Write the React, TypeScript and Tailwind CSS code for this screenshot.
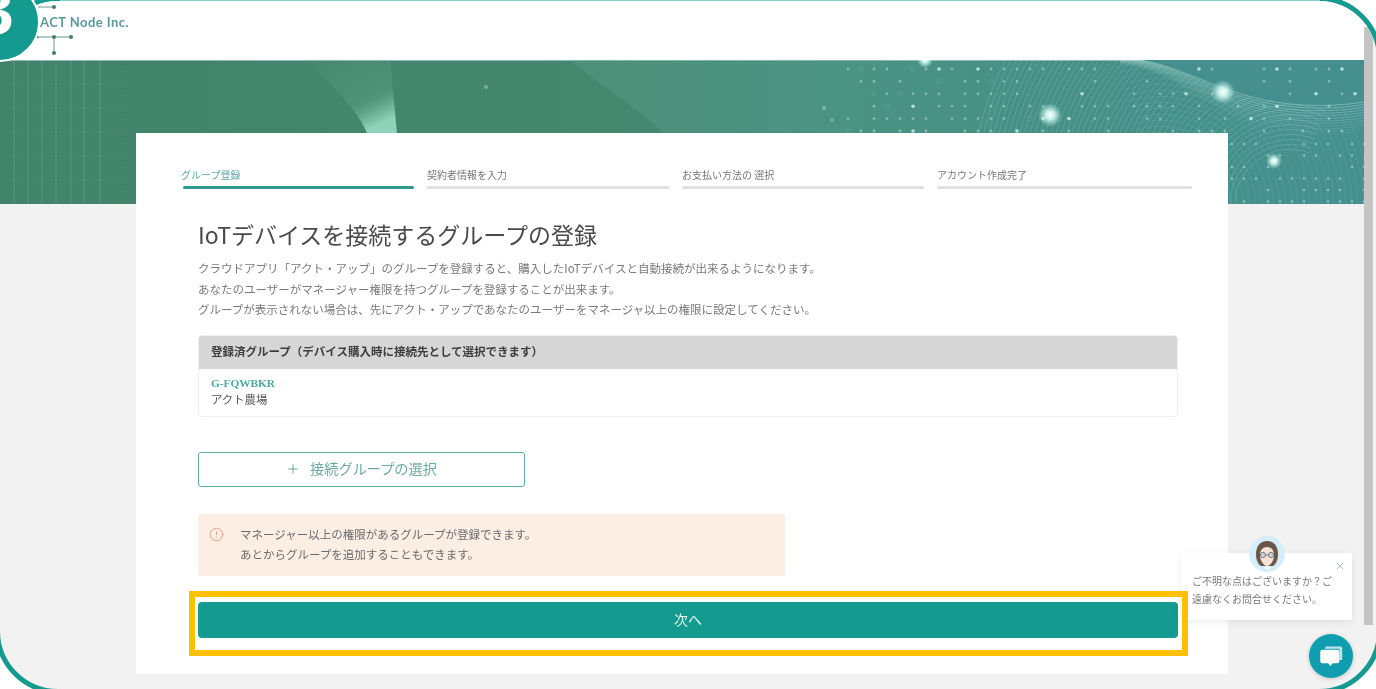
import { CircleAlert, Plus, X } from 'lucide-react'

const steps = [
  { label: 'グループ登録', width: 'w-[231px]', active: true },
  { label: '契約者情報を入力', width: 'w-[242px]', active: false },
  { label: 'お支払い方法の 選択', width: 'w-[242px]', active: false },
  { label: 'アカウント作成完了', width: 'w-[255px]', active: false },
]

// small repeatable noise so the dots stay in the same place on every load
const rand = (i: number) => {
  const v = Math.sin(i * 12.9898) * 43758.5453
  return v - Math.floor(v)
}

const dots: { x: number; y: number; r: number; o: number; ring: boolean }[] = []
for (let row = 0; row < 6; row++) {
  for (let col = 0; col < 40; col++) {
    const x = 848 + col * 13
    const y = 9 + row * 12.4
    const n = rand(row * 40 + col + 3)
    // the grid thins out to the right
    if (n < 0.3 + (col > 14 ? 0.25 : 0)) continue
    dots.push({ x, y, r: n > 0.93 ? 1.8 : 1.4, o: n > 0.93 ? 0.85 : 0.45, ring: n < 0.42 })
  }
}
for (let row = 0; row < 6; row++) {
  for (let col = 0; col < 12; col++) {
    const n = rand(row * 17 + col + 500)
    if (n < 0.4) continue
    dots.push({ x: 1232 + col * 12, y: 84 + row * 11.5, r: 1.3, o: 0.5, ring: false })
  }
}

const arcs = Array.from({ length: 54 }, (_, i) => {
  const r = 55 + i * 5
  return `M ${1290 - r} 144 A ${r} ${r} 0 0 1 ${1290 + r * 0.35} ${144 - r * 0.93}`
})

const crossArcs = Array.from({ length: 26 }, (_, i) => {
  const r = 60 + i * 6
  return `M ${1160 + r} 150 A ${r} ${r} 0 0 0 ${1160 - r * 0.3} ${150 - r * 0.95}`
})

const waves = Array.from({ length: 12 }, (_, i) => {
  const d = i * 2.6
  return `M 1120 ${-2 + d * 0.2} C 1180 ${0 + d * 0.3}, 1215 ${36 + d}, 1290 ${44 + d} C 1320 ${47 + d}, 1345 ${45 + d}, 1364 ${42 + d}`
})

function Banner() {
  return (
    <svg viewBox="0 0 1364 144" className="block h-[144px] w-full blur-[0.5px]">
      <defs>
        <linearGradient id="base" x1="0" x2="1" y1="0" y2="0">
          <stop offset="0" stopColor="#42836c" />
          <stop offset="0.45" stopColor="#45876f" />
          <stop offset="0.62" stopColor="#468f80" />
          <stop offset="1" stopColor="#45908f" />
        </linearGradient>
        <linearGradient id="wedge" x1="0" x2="0.6" y1="0" y2="1">
          <stop offset="0" stopColor="#6aa795" stopOpacity="0.08" />
          <stop offset="0.7" stopColor="#7fbba6" stopOpacity="0.22" />
          <stop offset="1" stopColor="#a8ecd2" stopOpacity="0.75" />
        </linearGradient>
        <linearGradient id="fan" x1="0" x2="1" y1="0" y2="0">
          <stop offset="0" stopColor="#62a893" stopOpacity="0.32" />
          <stop offset="0.6" stopColor="#62a893" stopOpacity="0.18" />
          <stop offset="1" stopColor="#62a893" stopOpacity="0.04" />
        </linearGradient>
        <radialGradient id="glow">
          <stop offset="0" stopColor="#ffffff" />
          <stop offset="0.35" stopColor="#d8fbf4" stopOpacity="0.9" />
          <stop offset="1" stopColor="#b8f0e6" stopOpacity="0" />
        </radialGradient>
      </defs>
      <rect width="1364" height="144" fill="url(#base)" />
      <rect width="1364" height="1" fill="#8db9ad" />

      {/* left grid */}
      {[14, 28, 42, 56, 71, 84, 100].map(x => (
        <line key={x} x1={x} x2={x} y1="0" y2="144" stroke="#7fb3a0" strokeOpacity="0.35" />
      ))}
      {Array.from({ length: 11 }, (_, i) => (
        <line key={i} x1="0" x2="135" y1={12 + i * 12} y2={12 + i * 12} stroke="#7fb3a0" strokeOpacity="0.1" />
      ))}

      {/* wedges */}
      <path d="M 306 0 L 390 0 L 397 73 L 367 73 C 355 45, 330 25, 306 0 Z" fill="url(#wedge)" />
      <path d="M 570 0 L 1000 0 L 1000 73 L 664 73 C 640 50, 600 25, 570 0 Z" fill="url(#fan)" />

      {/* fine arcs */}
      {arcs.map((d, i) => (
        <path key={i} d={d} fill="none" stroke="#b4e4dc" strokeOpacity="0.3" strokeWidth="0.7" />
      ))}
      {crossArcs.map((d, i) => (
        <path key={i} d={d} fill="none" stroke="#b4e4dc" strokeOpacity="0.14" strokeWidth="0.7" />
      ))}
      <path d="M 1120 -2 C 1180 0, 1215 36, 1290 44 C 1320 47, 1345 45, 1364 42 L 1364 0 L 1120 0 Z" fill="#45908f" />
      {waves.map((d, i) => (
        <path key={i} d={d} fill="none" stroke="#c4ece6" strokeOpacity={0.5 - i * 0.04} strokeWidth="0.8" />
      ))}

      {/* dots */}
      {dots.map((d, i) =>
        d.ring ? (
          <circle key={i} cx={d.x} cy={d.y} r={2.2} fill="none" stroke="#a8dcd2" strokeOpacity="0.25" strokeWidth="0.7" />
        ) : (
          <circle key={i} cx={d.x} cy={d.y} r={d.r} fill="#c6efe7" fillOpacity={d.o} />
        ),
      )}
      <circle cx="486" cy="27" r="2" fill="#8cc4b1" fillOpacity="0.7" />
      <circle cx="824" cy="48" r="2.2" fill="#8cc4b1" fillOpacity="0.7" />
      <circle cx="832" cy="60" r="2" fill="#8cc4b1" fillOpacity="0.6" />

      {/* glows */}
      <circle cx="925" cy="0" r="8" fill="url(#glow)" />
      <circle cx="1050" cy="55" r="12" fill="url(#glow)" />
      <circle cx="1223" cy="32" r="12" fill="url(#glow)" />
      <circle cx="1274" cy="101" r="8" fill="url(#glow)" />
    </svg>
  )
}

function Logo() {
  return (
    <svg viewBox="0 0 80 60" className="absolute left-[0px] top-[-1px] h-[60px] w-[80px]">
      <g stroke="#3f7d6c" strokeWidth="0.8" fill="none">
        <path d="M38 7 H54" />
        <path d="M37 37 H71" />
        <path d="M54 37 V53" />
      </g>
      <g fill="#3f7d6c">
        <circle cx="54" cy="7" r="2" />
        <circle cx="37" cy="37" r="1.4" />
        <circle cx="54" cy="37" r="2" />
        <circle cx="71" cy="37" r="2" />
        <circle cx="54" cy="53" r="2" />
      </g>
    </svg>
  )
}

function Avatar() {
  return (
    <svg viewBox="0 0 36 36" className="absolute left-[68px] top-[-17px] h-[36px] w-[36px]">
      <circle cx="18" cy="18" r="18" fill="#d6edfa" />
      <path d="M18 5 C10 5 7 12 7 18 C7 24 9 28 12 30 L24 30 C27 28 29 24 29 18 C29 12 26 5 18 5 Z" fill="#6b574a" />
      <path d="M18 11 C13 11 11 15 11 19 C11 25 15 30 18 30 C21 30 25 25 25 19 C25 15 23 11 18 11 Z" fill="#f6e3d6" />
      <circle cx="14" cy="19" r="2.6" fill="#c9d3da" stroke="#555" strokeWidth="0.7" />
      <circle cx="22" cy="19" r="2.6" fill="#c9d3da" stroke="#555" strokeWidth="0.7" />
      <path d="M16.6 19 H19.4" stroke="#555" strokeWidth="0.7" />
      <path d="M15 31 L18 34 L21 31 Z" fill="#ffffff" />
    </svg>
  )
}

export default function App() {
  return (
    <div className="relative h-[689px] w-[1376px] overflow-hidden bg-white font-['Noto_Sans_CJK_JP','Noto_Sans',sans-serif]">
      <div className="relative -ml-[5px] -mt-[4px] flex h-[698px] w-[1387px] overflow-hidden rounded-[63px] border-[5px] border-[#159a90] bg-[#f2f2f2]">
        <div className="flex w-[1364px] shrink-0 flex-col">
          {/* Header */}
          <div className="relative h-[59px] shrink-0 bg-white">
            <Logo />
            <span className="absolute left-[40px] top-[12px] font-['Lato',sans-serif] text-[13px] font-bold tracking-[0.45px] text-[#5c9a9a] blur-[0.4px]">
              ACT Node Inc.
            </span>
          </div>

          <Banner />

          {/* Card */}
          <div className="relative -mt-[71px] ml-[136px] h-[541px] w-[1092px] shrink-0 bg-white pl-[62px] pr-[50px] pt-[35px]">
            <div className="-ml-[15px] flex w-[1009px] gap-[13px]">
              {steps.map(step => (
                <div key={step.label} className={step.width}>
                  <p
                    className={`h-[14px] text-[10px] leading-[14px] blur-[0.4px] ${step.active ? '-ml-[2px] text-[#62a8a4]' : 'text-[#777]'}`}
                  >
                    {step.label}
                  </p>
                  <div className={`mt-[4px] h-[3px] rounded-full ${step.active ? 'bg-[#2f9a90]' : 'bg-[#e0e0e0]'}`} />
                </div>
              ))}
            </div>

            <h1 className="mt-[29px] text-[23px] font-normal leading-[32px] text-[#4a4a4a] blur-[0.3px]">
              IoTデバイスを接続するグループの登録
            </h1>
            <div className="mt-[8px] text-[11.5px] leading-[20.5px] text-[#7a7a7a] blur-[0.4px]">
              <p>クラウドアプリ「アクト・アップ」のグループを登録すると、購入したIoTデバイスと自動接続が出来るようになります。</p>
              <p>あなたのユーザーがマネージャー権限を持つグループを登録することが出来ます。</p>
              <p>グループが表示されない場合は、先にアクト・アップであなたのユーザーをマネージャ以上の権限に設定してください。</p>
            </div>

            {/* Registered groups */}
            <div className="mt-[15px] w-[980px] overflow-hidden rounded-[4px] border border-[#eeeeee]">
              <div className="flex h-[33px] items-center bg-[#d6d6d6] px-[12px] text-[11.5px] font-bold text-[#3d3d3d]">
                <span className="blur-[0.4px]">登録済グループ（デバイス購入時に接続先として選択できます）</span>
              </div>
              <div className="h-[47px] px-[12px] pt-[7px] blur-[0.3px]">
                <p className="font-['Liberation_Serif',serif] text-[11.3px] font-bold leading-[15px] text-[#4fa89c]">G-FQWBKR</p>
                <p className="text-[11.4px] leading-[16px] text-[#555]">アクト農場</p>
              </div>
            </div>

            <button className="mt-[35px] flex h-[35px] w-[327px] items-center justify-center gap-[10px] rounded-[3px] border border-[#5fafa8] bg-white text-[14.2px] text-[#6fa9a5]">
              <Plus size={14} strokeWidth={1.6} className="text-[#5fa09a]" />
              <span className="blur-[0.4px]">接続グループの選択</span>
            </button>

            <div className="mt-[27px] flex h-[62px] w-[587px] rounded-[2px] bg-[#fdeee4] pl-[11px] pt-[10px]">
              <CircleAlert size={15} strokeWidth={1.2} className="mt-[3px] text-[#d9866a]" />
              <div className="ml-[16px] text-[11.5px] leading-[20px] text-[#6a6a6a] blur-[0.4px]">
                <p>マネージャー以上の権限があるグループが登録できます。</p>
                <p>あとからグループを追加することもできます。</p>
              </div>
            </div>

            <div className="relative mt-[26px] w-[980px]">
              <button className="flex h-[36px] w-full items-center justify-center rounded-[4px] bg-[#159a90] text-[14px] text-[#e8f5f3]">
                <span className="blur-[0.4px]">次へ</span>
              </button>
              <div className="pointer-events-none absolute -bottom-[18px] -left-[9px] -right-[10px] -top-[11px] z-30 border-[6px] border-[#ffc000]" />
            </div>
          </div>
        </div>

        {/* Scrollbar */}
        <div className="w-[9px] shrink-0">
          <div className="h-[26px] bg-white" />
          <div className="h-[598px] bg-[#c4c4c4]" />
        </div>

        {/* Chat popup */}
        <div className="absolute left-[1181px] top-[552px] z-20 h-[67px] w-[171px] bg-white px-[11px] pt-[19px] text-[10px] leading-[18px] text-[#777] shadow-[0_2px_8px_rgba(0,0,0,0.08)]">
          <Avatar />
          <X size={12} strokeWidth={1.4} className="absolute right-[6px] top-[7px] text-[#7fa6bd]" />
          <p className="whitespace-nowrap blur-[0.4px]">ご不明な点はございますか？ご</p>
          <p className="whitespace-nowrap blur-[0.4px]">遠慮なくお問合せください。</p>
        </div>

        {/* Chat button */}
        <div className="absolute left-[1309px] top-[633px] z-20 flex h-[44px] w-[44px] items-center justify-center rounded-full bg-[#119db0] shadow-[0_1px_4px_rgba(0,0,0,0.2)]">
          <svg viewBox="0 0 24 24" className="h-[27px] w-[27px]">
            <path d="M7 3 H20 a1.5 1.5 0 0 1 1.5 1.5 V15 H19 V5 H6 Z" fill="#bfe6ec" />
            <path d="M4 6 H17 a2 2 0 0 1 2 2 V16 a2 2 0 0 1 -2 2 H13 L11 20.5 L9 18 H4 a2 2 0 0 1 -2 -2 V8 a2 2 0 0 1 2 -2 Z" fill="#ffffff" />
          </svg>
        </div>
      </div>

      <div className="absolute left-[60px] right-[56px] top-0 h-[1px] bg-[#7fd0c8]" />

      {/* Step badge */}
      <div className="absolute -left-[40px] -top-[18px] flex h-[80px] w-[80px] items-center justify-center overflow-hidden rounded-full border-[2px] border-white bg-[#159a90]">
        <span className="mb-[24px] mr-[10px] font-['Liberation_Sans',sans-serif] text-[68px] font-bold leading-none text-white">3</span>
      </div>
    </div>
  )
}
